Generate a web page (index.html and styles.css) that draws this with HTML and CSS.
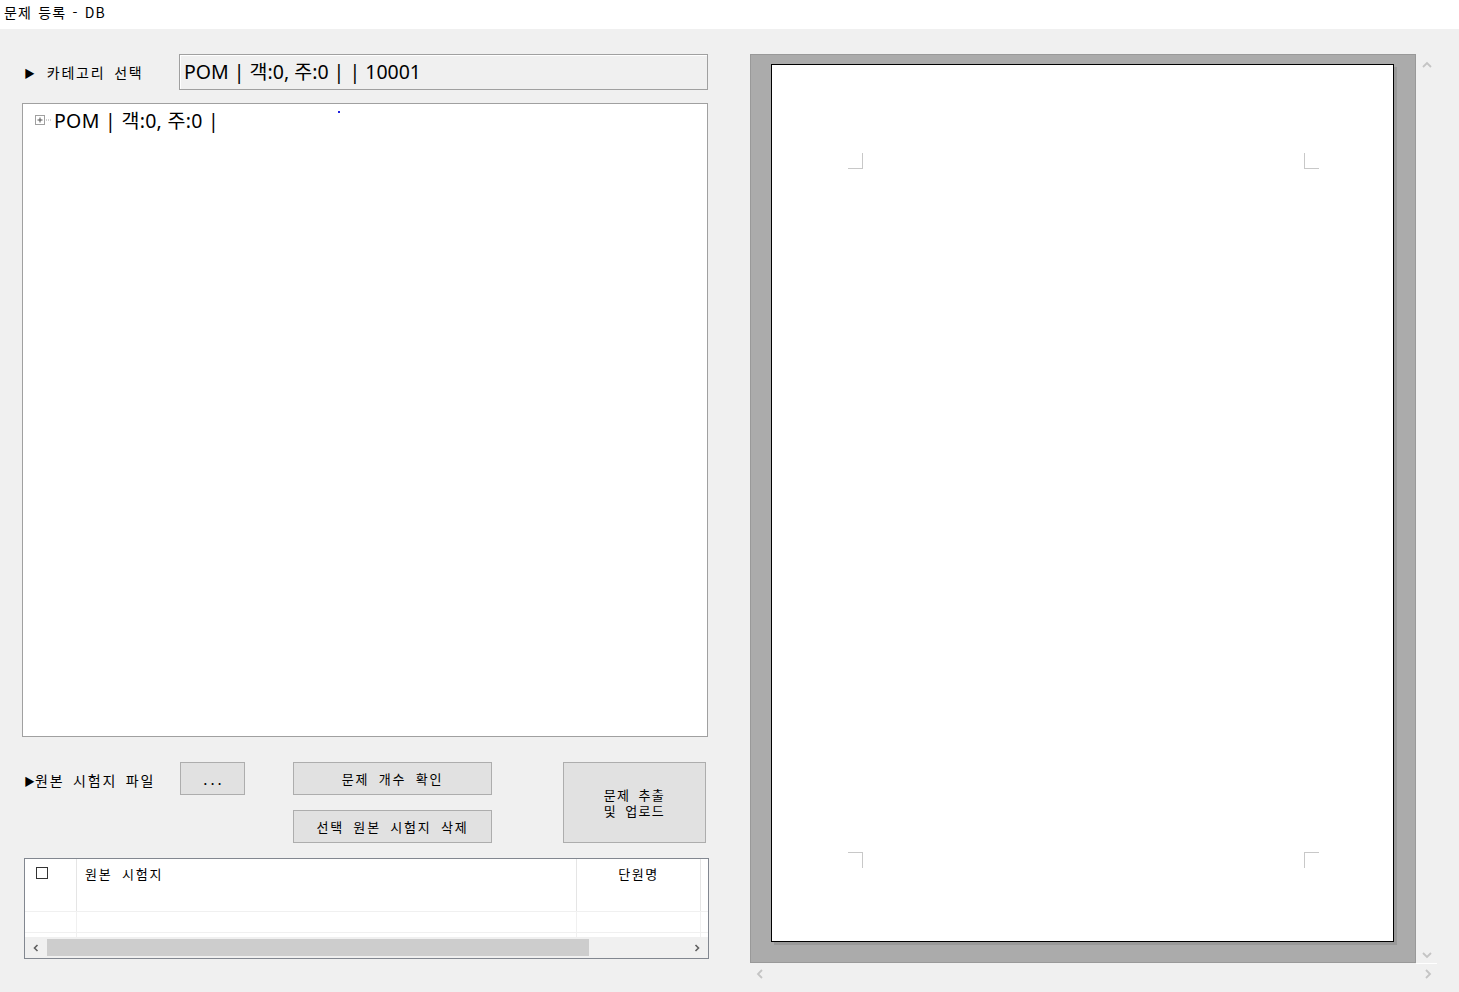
FILE: index.html
```html
<!DOCTYPE html>
<html lang="ko">
<head>
<meta charset="utf-8">
<title>문제 등록 - DB</title>
<link rel="stylesheet" href="styles.css">
</head>
<body>
<div class="window">
  <div class="titlebar">문제 등록 - DB</div>
  <div class="content">
    <div class="left">
      <div class="cat-row">
        <span class="label label-cat"><span class="tri">▶</span> 카테고리 선택</span>
        <div class="combo">POM | 객:0, 주:0 | | 10001</div>
      </div>
      <div class="tree">
        <div class="tree-item">
          <svg class="expander" width="16" height="11" viewBox="0 0 16 11">
            <rect x="0.5" y="0.5" width="9" height="9" fill="#fff" stroke="#a0a0a0"/>
            <path d="M2.5 5h5M5 2.5v5" stroke="#505050" stroke-width="1"/>
            <path d="M11 5h1M13 5h1M15 5h1" stroke="#a0a0a0" stroke-width="1"/>
          </svg>
          <span class="tree-text">POM | 객:0, 주:0 |</span>
        </div>
        <span class="stray-dot"></span>
      </div>
      <div class="controls">
        <span class="label label-file"><span class="tri">▶</span>원본 시험지 파일</span>
        <button class="btn btn-browse">...</button>
        <div class="btn-col">
          <button class="btn btn-wide">문제 개수 확인</button>
          <button class="btn btn-wide">선택 원본 시험지 삭제</button>
        </div>
        <button class="btn btn-big"><span>문제 추출<br>및 업로드</span></button>
      </div>
      <div class="listview">
        <div class="lv-body">
          <div class="lv-row lv-header">
            <div class="lv-cell c1"><span class="chk"></span></div>
            <div class="lv-cell c2">원본 시험지</div>
            <div class="lv-cell c3">단원명</div>
            <div class="lv-cell c4"></div>
          </div>
          <div class="lv-row lv-data">
            <div class="lv-cell c1"></div>
            <div class="lv-cell c2"></div>
            <div class="lv-cell c3"></div>
            <div class="lv-cell c4"></div>
          </div>
          <div class="lv-row lv-data">
            <div class="lv-cell c1"></div>
            <div class="lv-cell c2"></div>
            <div class="lv-cell c3"></div>
            <div class="lv-cell c4"></div>
          </div>
        </div>
        <div class="lv-hscroll">
          <span class="arrow">
            <svg width="8" height="8" viewBox="0 0 8 8"><path d="M5.5 1L2.5 4l3 3" fill="none" stroke="#606060" stroke-width="1.6"/></svg>
          </span>
          <span class="lv-track"><span class="lv-thumb"></span></span>
          <span class="arrow">
            <svg width="8" height="8" viewBox="0 0 8 8"><path d="M2.5 1l3 3-3 3" fill="none" stroke="#606060" stroke-width="1.6"/></svg>
          </span>
        </div>
      </div>
    </div>
    <div class="right">
      <div class="preview-wrap">
        <div class="preview">
          <div class="page">
            <span class="mark mark-tl"></span>
            <span class="mark mark-tr"></span>
            <span class="mark mark-bl"></span>
            <span class="mark mark-br"></span>
          </div>
        </div>
        <div class="vscroll">
          <svg width="10" height="8" viewBox="0 0 10 8"><path d="M1 6l4-4 4 4" fill="none" stroke="#c4c4c4" stroke-width="1.8"/></svg>
          <svg width="10" height="8" viewBox="0 0 10 8"><path d="M1 2l4 4 4-4" fill="none" stroke="#c4c4c4" stroke-width="1.8"/></svg>
        </div>
      </div>
      <div class="hscroll">
        <svg width="8" height="10" viewBox="0 0 8 10"><path d="M6 1L2 5l4 4" fill="none" stroke="#c4c4c4" stroke-width="1.8"/></svg>
        <svg width="8" height="10" viewBox="0 0 8 10"><path d="M2 1l4 4-4 4" fill="none" stroke="#c4c4c4" stroke-width="1.8"/></svg>
      </div>
    </div>
  </div>
</div>
</body>
</html>
```
FILE: styles.css
```css
* { box-sizing: border-box; }
html, body { margin: 0; padding: 0; }
body {
  width: 1459px;
  height: 992px;
  overflow: hidden;
  background: #f0f0f0;
  font-family: "Noto Sans CJK KR", "Noto Sans", sans-serif;
  color: #000;
}
.window { width: 1459px; height: 992px; display: flex; flex-direction: column; }
.titlebar {
  height: 29px;
  background: #fff;
  font-size: 14px;
  line-height: 24px;
  padding-left: 4px;
  letter-spacing: 1.2px;
  word-spacing: 1px;
}
.content { display: flex; padding: 25px 0 0 22px; }
.left { width: 687px; display: flex; flex-direction: column; }

.label {
  font-size: 14px;
  letter-spacing: 1.8px;
  word-spacing: 3px;
  white-space: nowrap;
}
.tri { font-size: 11px; letter-spacing: 0; }
.cat-row { display: flex; align-items: center; height: 36px; }
.label-cat { margin-left: 2px; width: 155px; }
.label-cat .tri { margin-right: 3px; }
.combo {
  width: 529px;
  height: 36px;
  border: 1px solid #a0a0a0;
  box-shadow: inset 1px 1px 0 #fff;
  background: #f0f0f0;
  font-family: "Noto Sans", "Noto Sans CJK KR", sans-serif;
  font-size: 19.5px;
  letter-spacing: 0;
  line-height: 33px;
  padding-left: 4px;
  white-space: nowrap;
}

.tree {
  position: relative;
  margin-top: 13px;
  width: 686px;
  height: 634px;
  background: #fff;
  border: 1px solid #a0a0a0;
}
.tree-item {
  display: flex;
  align-items: center;
  height: 30px;
  padding: 1px 0 0 12px;
  font-family: "Noto Sans", "Noto Sans CJK KR", sans-serif;
  font-size: 19.5px;
  letter-spacing: 0.3px;
  white-space: nowrap;
}
.expander { margin-right: 3px; margin-top: 1px; }
.stray-dot {
  position: absolute;
  left: 315px;
  top: 7px;
  width: 2px;
  height: 2px;
  background: #2020e0;
}

.controls { display: flex; align-items: flex-start; margin-top: 25px; height: 81px; }
.label-file { margin: 8px 0 0 2px; width: 156px; }
.btn {
  font-family: "Noto Sans CJK KR", sans-serif;
  font-size: 13px;
  letter-spacing: 1.8px;
  word-spacing: 4px;
  background: #e1e1e1;
  border: 1px solid #adadad;
  color: #000;
  padding: 0;
  margin: 0;
}
.btn-browse { width: 65px; height: 33px; font-size: 15px; letter-spacing: 3px; line-height: 20px; padding-left: 3px; }
.btn-col { display: flex; flex-direction: column; gap: 15px; margin-left: 48px; }
.btn-wide { width: 199px; height: 33px; }
.btn-big {
  width: 143px;
  height: 81px;
  margin-left: 71px;
  letter-spacing: 1.4px;
  word-spacing: 3px;
  font-size: 13px;
}
.btn-big span { display: block; line-height: 16px; }

.listview {
  margin: 15px 0 0 2px;
  width: 685px;
  height: 101px;
  background: #fff;
  border: 1px solid #828790;
  display: flex;
  flex-direction: column;
}
.lv-body { flex: 1; overflow: hidden; }
.lv-row { display: flex; }
.lv-header { height: 52px; }
.lv-data { height: 21px; border-top: 1px solid #f0f0f0; }
.lv-cell { height: 100%; }
.c1 { width: 52px; border-right: 1px solid #f0f0f0; padding: 8px 0 0 11px; }
.c2 { width: 500px; border-right: 1px solid #f0f0f0; }
.c3 { width: 124px; border-right: 1px solid #f0f0f0; }
.c4 { flex: 1; }
.lv-header .c1 { border-right-color: #e5e5e5; }
.lv-header .c2 {
  font-size: 13px;
  letter-spacing: 1.8px;
  word-spacing: 4px;
  padding: 5px 0 0 8px;
  border-right-color: #e5e5e5;
}
.lv-header .c3 {
  font-size: 13px;
  letter-spacing: 1.6px;
  text-align: center;
  padding-top: 5px;
  border-right-color: #e5e5e5;
}
.chk { display: block; width: 12px; height: 12px; border: 1.5px solid #333; background: #fff; }
.lv-hscroll {
  height: 21px;
  display: flex;
  align-items: center;
  background: #f0f0f0;
}
.lv-hscroll .arrow { width: 22px; height: 100%; display: flex; align-items: center; justify-content: center; }
.lv-track { flex: 1; height: 100%; padding: 2px 0; }
.lv-thumb { display: block; width: 542px; height: 100%; background: #cdcdcd; }

.right { margin-left: 41px; display: flex; flex-direction: column; }
.preview-wrap { display: flex; }
.preview {
  width: 666px;
  height: 909px;
  background: #ababab;
  border: 1px solid #999;
  padding: 9px 0 0 20px;
}
.page {
  position: relative;
  width: 623px;
  height: 878px;
  background: #fff;
  border: 1px solid #000;
  box-shadow: 3px 3px 0 #999;
}
.mark { position: absolute; width: 15px; height: 16px; border: 0 solid #c8c8c8; }
.mark-tl { left: 76px; top: 88px; border-right-width: 1px; border-bottom-width: 1px; }
.mark-tr { right: 74px; top: 88px; border-left-width: 1px; border-bottom-width: 1px; }
.mark-bl { left: 76px; bottom: 73px; border-right-width: 1px; border-top-width: 1px; }
.mark-br { right: 74px; bottom: 73px; border-left-width: 1px; border-top-width: 1px; }
.vscroll {
  width: 21px;
  height: 910px;
  display: flex;
  flex-direction: column;
  justify-content: space-between;
  align-items: center;
  padding: 7px 0 4px;
  border-bottom: 1px solid #fff;
}
.hscroll {
  width: 687px;
  height: 20px;
  display: flex;
  justify-content: space-between;
  align-items: center;
  padding: 0 5px 0 6px;
}
```
